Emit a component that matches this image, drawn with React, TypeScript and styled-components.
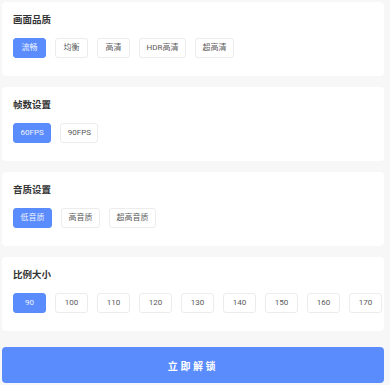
import React, { useState } from "react";
import styled, { createGlobalStyle } from "styled-components";

const GlobalStyle = createGlobalStyle`
  html, body {
    margin: 0;
    padding: 0;
    background: #f7f7f7;
    font-family: Roboto, "Noto Sans CJK SC", sans-serif;
  }
  * {
    box-sizing: border-box;
  }
`;

type Group = {
  title: string;
  options: string[];
};

const groups: Group[] = [
  { title: "画面品质", options: ["流畅", "均衡", "高清", "HDR高清", "超高清"] },
  { title: "帧数设置", options: ["60FPS", "90FPS"] },
  { title: "音质设置", options: ["低音质", "高音质", "超高音质"] },
  {
    title: "比例大小",
    options: ["90", "100", "110", "120", "130", "140", "150", "160", "170"],
  },
];

export default function App() {
  const [picked, setPicked] = useState<number[]>([0, 0, 0, 0]);

  const pick = (g: number, i: number) => {
    const next = [...picked];
    next[g] = i;
    setPicked(next);
  };

  return (
    <>
      <GlobalStyle />
      <Page>
        {groups.map((group, g) => (
          <Card key={group.title}>
            <Title>{group.title}</Title>
            <Options>
              {group.options.map((opt, i) => (
                <Chip
                  key={opt}
                  $active={picked[g] === i}
                  onClick={() => pick(g, i)}
                >
                  {opt}
                </Chip>
              ))}
            </Options>
          </Card>
        ))}
        <UnlockButton>立即解锁</UnlockButton>
      </Page>
    </>
  );
}

const Page = styled.div`
  display: flex;
  flex-direction: column;
  gap: 11px;
  padding: 2px 6px 2px 2px;
  width: 390px;
`;

const Card = styled.div`
  background: #fff;
  border-radius: 4px;
  padding: 11px 11px 18px;
  overflow: hidden;
`;

const Title = styled.div`
  font-size: 9.5px;
  line-height: 14px;
  font-weight: 700;
  color: #333;
`;

const Options = styled.div`
  display: flex;
  gap: 9px;
  margin-top: 11px;
`;

const Chip = styled.button<{ $active?: boolean }>`
  flex-shrink: 0;
  min-width: 33px;
  height: 20px;
  padding: 0 6.5px;
  border-radius: 3px;
  border: 1px solid ${(p) => (p.$active ? "#5b8cfd" : "#ececec")};
  background: ${(p) => (p.$active ? "#5b8cfd" : "#fff")};
  color: ${(p) => (p.$active ? "#eef3ff" : "#5a5a5a")};
  font-family: inherit;
  font-size: 8px;
  line-height: 18px;
  cursor: pointer;
`;

const UnlockButton = styled.button`
  margin-top: 5px;
  height: 36px;
  border: none;
  border-radius: 4px;
  background: #5b8cfd;
  color: #fff;
  font-family: inherit;
  font-size: 10px;
  font-weight: 700;
  letter-spacing: 2.6px;
  cursor: pointer;
`;
